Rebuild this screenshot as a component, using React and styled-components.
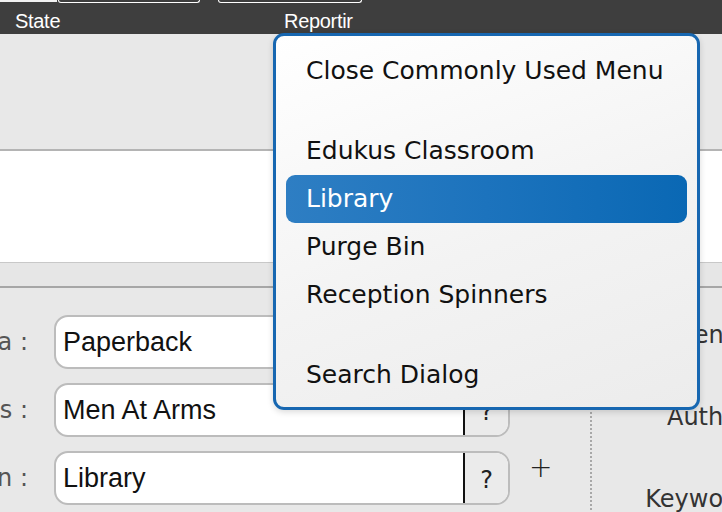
import React from "react";
import styled, { createGlobalStyle } from "styled-components";

const Global = createGlobalStyle`
  html, body { margin: 0; padding: 0; }
  body {
    width: 722px;
    height: 512px;
    overflow: hidden;
    background: #e8e8e8;
    font-family: "DejaVu Sans", sans-serif;
  }
  #root { width: 722px; height: 512px; }
`;

const Page = styled.div`
  position: relative;
  width: 722px;
  height: 512px;
  overflow: hidden;
  display: flex;
  flex-direction: column;
  background: #e8e8e8;
`;

const TopBar = styled.div`
  height: 34px;
  flex: none;
  background: #3e3e3e;
  display: flex;
  flex-direction: column;
`;

const TabStrip = styled.div`
  height: 3px;
  display: flex;
  align-items: flex-start;
`;

const TabStub = styled.div`
  width: 57px;
  height: 2px;
  background: #f2f2f2;
`;

const TabOutline = styled.div`
  box-sizing: border-box;
  width: ${(p) => p.$w}px;
  margin-left: ${(p) => p.$ml}px;
  height: 3px;
  border: 1.5px solid #ffffff;
  border-top: none;
  border-radius: 0 0 6px 6px;
`;

const BarLabels = styled.div`
  display: flex;
  padding: 6px 0 0 15px;
`;

const BarLabel = styled.div`
  width: ${(p) => (p.$w ? `${p.$w}px` : "auto")};
  font-family: "Liberation Sans", Arial, sans-serif;
  font-size: 20px;
  line-height: 24px;
  color: #ffffff;
  letter-spacing: -0.3px;
`;

const Toolbar = styled.div`
  height: 115px;
  flex: none;
  background: #e8e8e8;
  border-bottom: 2px solid #b4b4b4;
`;

const WhitePane = styled.div`
  height: 111px;
  flex: none;
  background: #ffffff;
  border-bottom: 1px solid #c8c8c8;
`;

const Band = styled.div`
  height: 23px;
  flex: none;
  background: #e6e6e6;
  border-bottom: 2px solid #a6a6a6;
`;

const FormArea = styled.div`
  flex: 1;
  display: grid;
  grid-template-columns: 590px 1fr;
`;

const FormColumn = styled.div`
  display: flex;
  flex-direction: column;
  gap: 14px;
  padding-top: 27px;
`;

const Row = styled.div`
  display: flex;
  align-items: center;
  height: 54px;
`;

const Label = styled.div`
  width: 28px;
  flex: none;
  display: flex;
  justify-content: flex-end;
  overflow: hidden;
  white-space: nowrap;
  margin-right: 26px;
  font-size: 24px;
  color: #555555;
`;

const Field = styled.div`
  box-sizing: border-box;
  width: 456px;
  height: 54px;
  flex: none;
  display: flex;
  border: 2px solid #bcbcbc;
  border-radius: 14px;
  background: #ffffff;
  overflow: hidden;
`;

const FieldText = styled.div`
  flex: 1;
  padding-left: 7px;
  display: flex;
  align-items: center;
  font-family: "Liberation Sans", Arial, sans-serif;
  font-size: 27px;
  color: #111111;
`;

const HelpButton = styled.div`
  width: 45px;
  flex: none;
  display: flex;
  align-items: center;
  justify-content: center;
  border-left: 2px solid #111111;
  background: #ebebeb;
  font-size: 24px;
  color: #222222;
  padding-top: 4px;
  box-sizing: border-box;
`;

const Plus = styled.div`
  align-self: flex-start;
  margin: 2px 0 0 19px;
  font-size: 28px;
  line-height: 30px;
  font-weight: 300;
  color: #222222;
`;

const RightPanel = styled.div`
  border-left: 2px dotted #a8a8a8;
  display: flex;
  flex-direction: column;
  gap: 52px;
  padding-top: 32px;
`;

const RightLabel = styled.div`
  width: 184px;
  text-align: right;
  white-space: nowrap;
  font-size: 24px;
  line-height: 30px;
  color: #333333;
`;

const Menu = styled.div`
  position: absolute;
  left: 273px;
  top: 33px;
  width: 427px;
  height: 377px;
  box-sizing: border-box;
  border: 3px solid #1767b1;
  border-radius: 11px;
  background: linear-gradient(160deg, #ffffff 0%, #f3f3f3 55%, #ececec 100%);
  padding: 11px 0 8px;
  display: flex;
  flex-direction: column;
  box-shadow: 0 2px 6px rgba(0, 0, 0, 0.15);
`;

const MenuItem = styled.div`
  height: 48px;
  margin: 0 10px;
  padding-left: 20px;
  border-radius: 9px;
  font-size: 25px;
  line-height: 48px;
  white-space: nowrap;
  color: ${(p) => (p.$active ? "#ffffff" : "#111111")};
  background: ${(p) =>
    p.$active ? "linear-gradient(90deg, #2e7ec3 0%, #1c73bd 50%, #0a68b4 100%)" : "transparent"};
`;

const MenuSeparator = styled.div`
  height: 32px;
`;

const rows = [
  { label: "Media :", value: "Paperback" },
  { label: "Series :", value: "Men At Arms" },
  { label: "Location :", value: "Library" },
];

const menu = [
  "Close Commonly Used Menu",
  null,
  "Edukus Classroom",
  "Library",
  "Purge Bin",
  "Reception Spinners",
  null,
  "Search Dialog",
];

export default function App() {
  return (
    <>
      <Global />
      <Page>
        <TopBar>
          <TabStrip>
            <TabStub />
            <TabOutline $w={142} $ml={1} />
            <TabOutline $w={144} $ml={18} />
          </TabStrip>
          <BarLabels>
            <BarLabel $w={269}>State</BarLabel>
            <BarLabel>Reportir</BarLabel>
          </BarLabels>
        </TopBar>
        <Toolbar />
        <WhitePane />
        <Band />
        <FormArea>
          <FormColumn>
            {rows.map((r) => (
              <Row key={r.label}>
                <Label>{r.label}</Label>
                <Field>
                  <FieldText>{r.value}</FieldText>
                  <HelpButton>?</HelpButton>
                </Field>
                <Plus>+</Plus>
              </Row>
            ))}
          </FormColumn>
          <RightPanel>
            <RightLabel>Genres :</RightLabel>
            <RightLabel>Authors :</RightLabel>
            <RightLabel>Keywords :</RightLabel>
          </RightPanel>
        </FormArea>
        <Menu>
          {menu.map((m, i) =>
            m === null ? (
              <MenuSeparator key={i} />
            ) : (
              <MenuItem key={i} $active={m === "Library"}>
                {m}
              </MenuItem>
            )
          )}
        </Menu>
      </Page>
    </>
  );
}
